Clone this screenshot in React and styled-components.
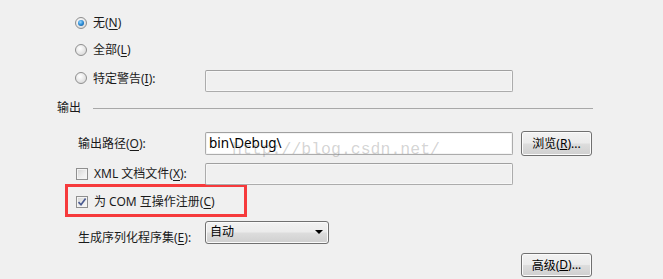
import styled, { createGlobalStyle } from "styled-components";

const GlobalStyle = createGlobalStyle`
  html, body {
    margin: 0;
    padding: 0;
    background: #f0f0f0;
  }
  body {
    font-family: "Noto Sans", "Noto Sans CJK SC", sans-serif;
    font-size: 12px;
    color: #1a1a1a;
  }
`;

const Page = styled.div`
  position: relative;
  width: 663px;
  height: 279px;
  overflow: hidden;
  padding-top: 10px;
  box-sizing: border-box;
`;

const RadioRow = styled.div`
  display: flex;
  align-items: ${(p) => (p.top ? "flex-start" : "center")};
  height: ${(p) => p.h}px;
  padding-left: 75px;
`;

const RadioDot = styled.span`
  position: relative;
  width: 12px;
  height: 12px;
  box-sizing: border-box;
  border-radius: 50%;
  border: 1px solid #8f8f8f;
  background: radial-gradient(circle at 40% 35%, #ffffff 0%, #e6e6e6 55%, #cfcfcf 100%);
  flex-shrink: 0;
  margin-top: ${(p) => p.mt || 0}px;

  &::after {
    content: "";
    display: ${(p) => (p.checked ? "block" : "none")};
    position: absolute;
    left: 2px;
    top: 2px;
    width: 6px;
    height: 6px;
    border-radius: 50%;
    background: radial-gradient(circle at 40% 35%, #9ad8ff 0%, #2a8ad4 50%, #0b4f8f 100%);
  }
`;

const Label = styled.span`
  line-height: 16px;
  white-space: nowrap;
  margin-left: ${(p) => p.ml || 0}px;
  margin-top: ${(p) => p.mt || 0}px;
  width: ${(p) => (p.w ? p.w + "px" : "auto")};
  flex-shrink: 0;

  u {
    text-underline-offset: 2px;
  }
`;

const TextBox = styled.div`
  width: 308px;
  height: ${(p) => p.h || 22}px;
  box-sizing: border-box;
  border: 1px solid #acacac;
  border-top-color: #a0a0a0;
  border-radius: 2px;
  background: ${(p) => (p.enabled ? "#ffffff" : "#f0f0f0")};
  box-shadow: inset 0 0 0 1px ${(p) => (p.enabled ? "#f4f4f4" : "#f7f7f7")};
  margin-top: ${(p) => p.mt || 0}px;
  padding: 2px 4px 0 3px;
  font-size: 13.5px;
  line-height: 17px;
  color: #000;
  flex-shrink: 0;
`;

const SectionRow = styled.div`
  display: flex;
  align-items: center;
  height: 30px;
  padding-left: 57px;
  padding-right: 70px;
`;

const Rule = styled.div`
  flex: 1;
  height: 1px;
  background: #a8a8a8;
  margin-left: 12px;
`;

const FieldRow = styled.div`
  display: flex;
  align-items: center;
  height: ${(p) => p.h}px;
  margin-top: ${(p) => p.mt || 0}px;
  padding-left: ${(p) => p.pl || 78}px;
`;

const Button = styled.div`
  width: 71px;
  height: ${(p) => p.h || 25}px;
  box-sizing: border-box;
  margin-left: 8px;
  border: 1px solid #707070;
  border-radius: 3px;
  background: linear-gradient(to bottom, #f2f2f2 0%, #ebebeb 48%, #dddddd 52%, #cfcfcf 100%);
  box-shadow: inset 0 0 0 1px #fbfbfb;
  display: flex;
  align-items: center;
  justify-content: center;
  padding-bottom: 1px;
  color: #000;
  flex-shrink: 0;
`;

const CheckBox = styled.span`
  display: flex;
  align-items: center;
  justify-content: center;
  width: 12px;
  height: 12px;
  box-sizing: border-box;
  border: 1px solid #8f8f8f;
  background: linear-gradient(135deg, #d4d4d4 0%, #eeeeee 60%, #f8f8f8 100%);
  box-shadow: inset 0 0 0 1px #f4f4f4;
  flex-shrink: 0;
`;

const RedFrame = styled.div`
  display: flex;
  align-items: center;
  width: 182px;
  height: 33px;
  box-sizing: border-box;
  margin-left: 65px;
  margin-top: -1px;
  padding: 3px 0 0 8px;
  border: 3px solid #f63a3c;
`;

const Select = styled.div`
  position: relative;
  width: 124px;
  height: 23px;
  box-sizing: border-box;
  border: 1px solid #707070;
  border-radius: 3px;
  background: linear-gradient(to bottom, #f2f2f2 0%, #ebebeb 48%, #dddddd 52%, #cfcfcf 100%);
  box-shadow: inset 0 0 0 1px #fafafa;
  padding: 2px 0 0 4px;
  line-height: 16px;
  color: #000;
  display: flex;
  align-items: flex-start;
  flex-shrink: 0;
`;

const Arrow = styled.span`
  position: absolute;
  right: 5px;
  top: 8px;
  width: 0;
  height: 0;
  border-left: 4px solid transparent;
  border-right: 4px solid transparent;
  border-top: 4px solid #000;
`;

const ButtonRow = styled.div`
  display: flex;
  justify-content: flex-end;
  margin-top: 9px;
  padding-right: 71px;
`;

/* faint blog watermark laid over the form */
const Watermark = styled.div`
  position: absolute;
  left: 232px;
  top: 140px;
  font-family: "Liberation Mono", "DejaVu Sans Mono", monospace;
  font-size: 16.5px;
  line-height: 20px;
  color: rgba(110, 110, 110, 0.3);
  pointer-events: none;
  white-space: nowrap;
`;

const Check = () => (
  <svg width="10" height="10" viewBox="0 0 10 10">
    <path d="M1.5 5.2 L4 7.8 L8.6 1.6" fill="none" stroke="#4a5b91" strokeWidth="1.7" />
  </svg>
);

export default function App() {
  return (
    <Page>
      <GlobalStyle />
      <RadioRow h={26}>
        <RadioDot checked />
        <Label ml={6}>
          无(<u>N</u>)
        </Label>
      </RadioRow>
      <RadioRow h={27}>
        <RadioDot />
        <Label ml={6}>
          全部(<u>L</u>)
        </Label>
      </RadioRow>
      <RadioRow h={30} top>
        <RadioDot mt={9} />
        <Label ml={6} mt={8} w={112}>
          特定警告(<u>I</u>):
        </Label>
        <TextBox mt={7} />
      </RadioRow>

      <SectionRow>
        <Label>输出</Label>
        <Rule />
      </SectionRow>

      <FieldRow h={25} mt={8}>
        <Label w={127}>
          输出路径(<u>O</u>):
        </Label>
        <TextBox enabled h={23}>
          bin\Debug\
        </TextBox>
        <Button>
          浏览(<u>R</u>)...
        </Button>
      </FieldRow>

      <FieldRow h={22} mt={7} pl={76}>
        <CheckBox />
        <Label ml={6} w={111}>
          XML 文档文件(<u>X</u>):
        </Label>
        <TextBox />
      </FieldRow>

      <RedFrame>
        <CheckBox>
          <Check />
        </CheckBox>
        <Label ml={6}>
          为 COM 互操作注册(<u>C</u>)
        </Label>
      </RedFrame>

      <FieldRow h={23} mt={4}>
        <Label w={127} mt={10}>
          生成序列化程序集(<u>E</u>):
        </Label>
        <Select>
          自动
          <Arrow />
        </Select>
      </FieldRow>

      <ButtonRow>
        <Button h={24}>
          高级(<u>D</u>)...
        </Button>
      </ButtonRow>

      <Watermark>http://blog.csdn.net/</Watermark>
    </Page>
  );
}
